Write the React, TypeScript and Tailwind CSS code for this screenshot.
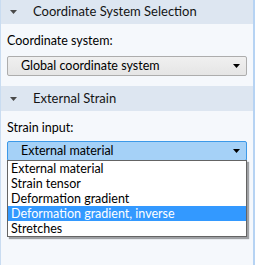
const font = { fontFamily: 'Lato, "Noto Sans", sans-serif' }

function Caret({ className = '' }: { className?: string }) {
  return (
    <svg width="7" height="4" viewBox="0 0 7 4" className={className}>
      <path d="M0 0H7L3.5 4Z" fill="currentColor" />
    </svg>
  )
}

function SectionHeader({ title, h }: { title: string; h: string }) {
  return (
    <div className={`flex items-center ${h} bg-[#dde6f1] text-[13px] text-[#141414]`}>
      <Caret className="ml-[9px] mr-[16px] text-[#4a4a4a]" />
      <span>{title}</span>
    </div>
  )
}

const options = [
  'External material',
  'Strain tensor',
  'Deformation gradient',
  'Deformation gradient, inverse',
  'Stretches',
]

export default function App() {
  return (
    <div
      className="w-[255px] h-[265px] bg-[#f5f8fc] border-l border-l-[#c9dcf1] border-r-2 border-r-[#b6d3f3] overflow-hidden text-[12.5px] text-black"
      style={font}
    >
      <SectionHeader title="Coordinate System Selection" h="h-[24px]" />
      <div className="px-[6px] pt-[9px] pb-[10px]">
        <div className="h-[16px] leading-[16px]">Coordinate system:</div>
        <div className="mt-[7px] h-[20px] flex items-center justify-between pl-[13px] pr-[6px] rounded-[2px] border border-[#adadad] bg-gradient-to-b from-[#f0f0f0] to-[#e5e5e5]">
          <span>Global coordinate system</span>
          <Caret />
        </div>
      </div>
      <SectionHeader title="External Strain" h="h-[25px]" />
      <div className="px-[6px] pt-[9px]">
        <div className="h-[16px] leading-[16px]">Strain input:</div>
        <div className="relative mt-[5px]">
          <div className="h-[20px] flex items-center justify-between pl-[13px] pr-[6px] rounded-[2px] border border-[#3c99e8] bg-[#a5d1f7]">
            <span>External material</span>
            <Caret />
          </div>
          <div className="absolute left-0 right-0 top-[19px] bg-white border border-[#646464] shadow-[2px_2px_1px_rgba(0,0,0,0.35)]">
            {options.map((o) => (
              <div
                key={o}
                className={
                  o === 'Deformation gradient, inverse'
                    ? 'h-[15px] leading-[15px] pl-[3px] bg-[#3399ff] text-white'
                    : 'h-[15px] leading-[15px] pl-[3px]'
                }
              >
                {o}
              </div>
            ))}
          </div>
        </div>
      </div>
    </div>
  )
}
